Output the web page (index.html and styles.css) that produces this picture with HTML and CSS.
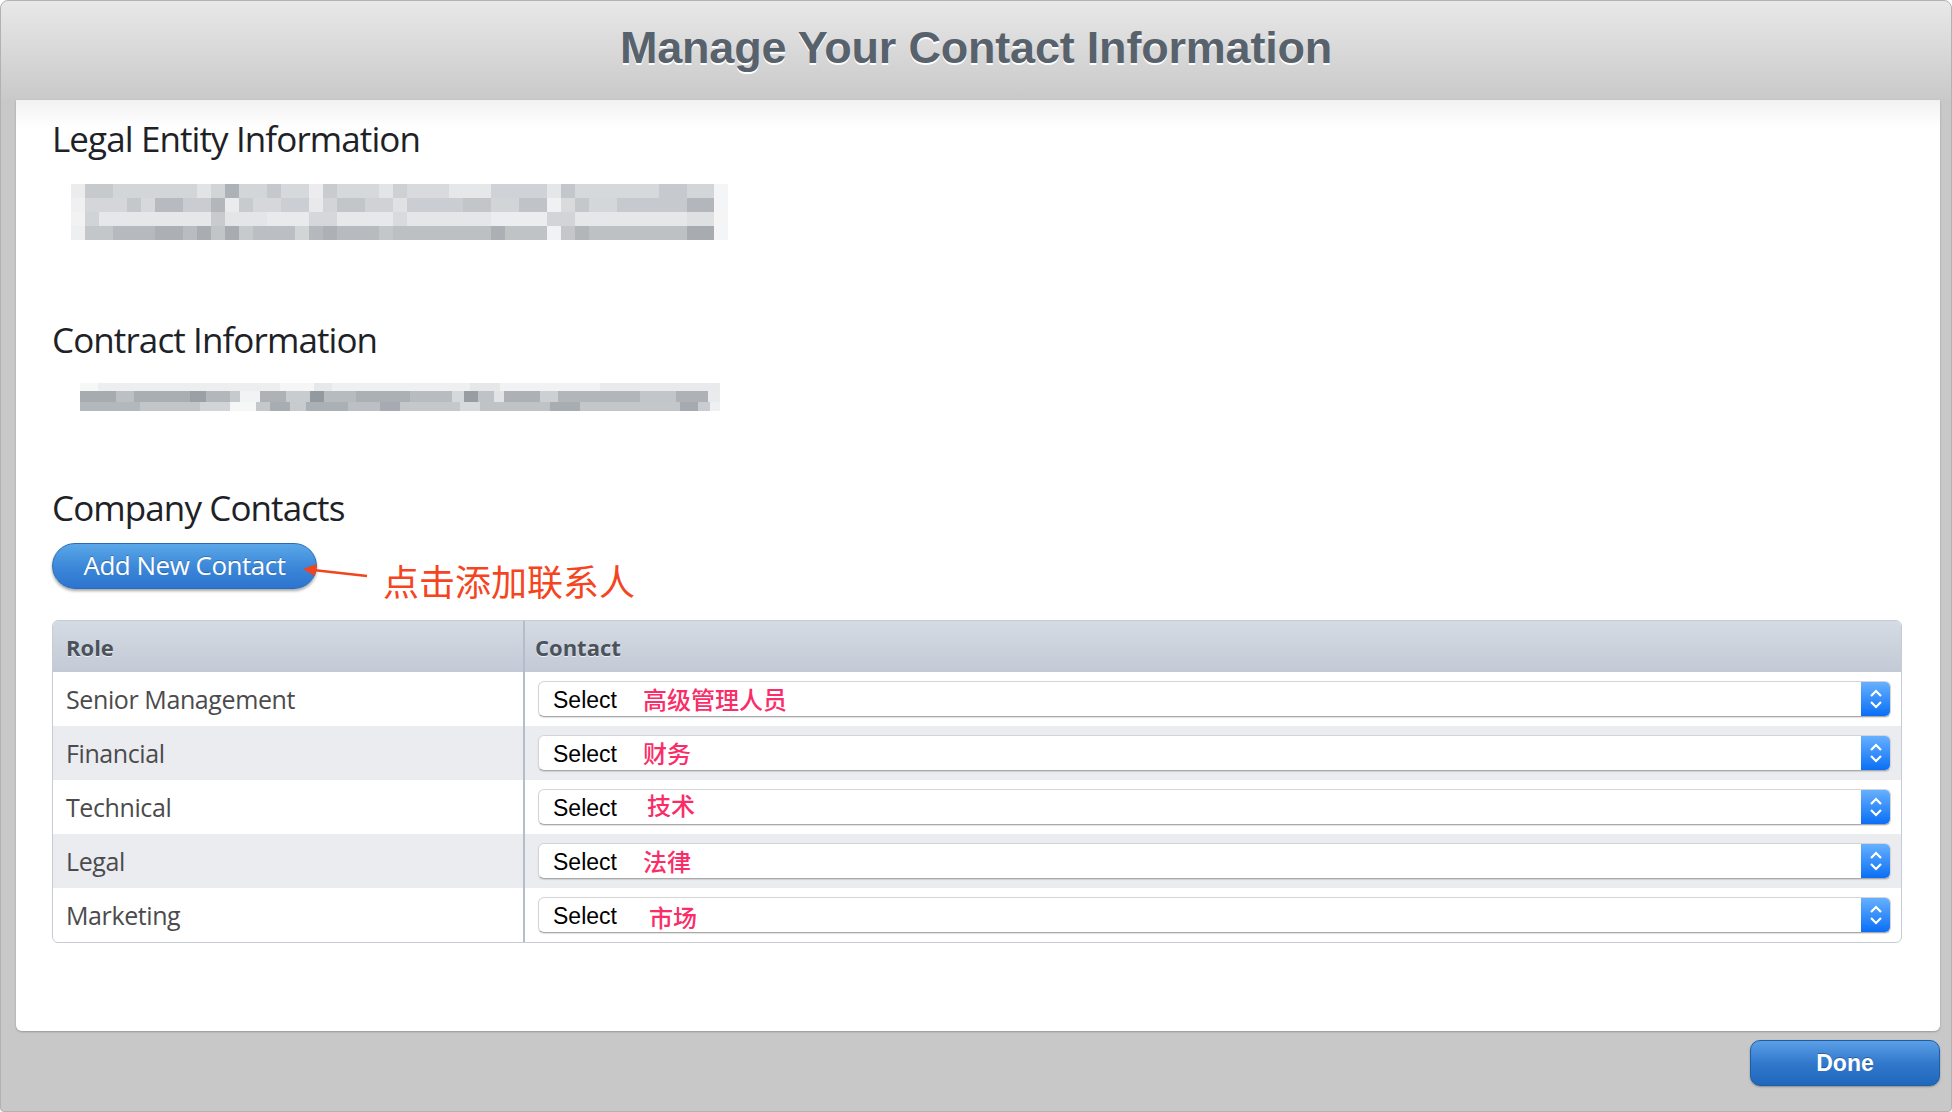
FILE: index.html
```html
<!DOCTYPE html>
<html lang="en">
<head>
  <meta charset="UTF-8">
  <meta name="viewport" content="width=device-width, initial-scale=1.0">
  <title>Manage Your Contact Information</title>
  <link rel="stylesheet" href="styles.css">
</head>
<body>
  <div class="window">
    <header class="titlebar">
      <h1>Manage Your Contact Information</h1>
    </header>

    <main class="panel">
      <h2 class="section-title">Legal Entity Information</h2>
      <div class="redacted entity">
        <div class="px e1"></div>
        <div class="px e2"></div>
        <div class="px e3"></div>
        <div class="px e4"></div>
      </div>

      <h2 class="section-title contract-title">Contract Information</h2>
      <div class="redacted contract">
        <div class="px c1"></div>
        <div class="px c2"></div>
        <div class="px c3"></div>
      </div>

      <h2 class="section-title contacts-title">Company Contacts</h2>
      <div class="add-row">
        <button class="btn-add">Add New Contact</button>
        <svg class="arrow" width="70" height="20" viewBox="0 0 70 20">
          <line x1="10" y1="6" x2="64" y2="12" stroke="#f2441d" stroke-width="2.5"/>
          <polygon points="0,5 14,0 12,12" fill="#f2441d"/>
        </svg>
        <span class="note">点击添加联系人</span>
      </div>

      <div class="table-wrap">
        <table class="roles">
          <thead>
            <tr>
              <th class="col-role">Role</th>
              <th>Contact</th>
            </tr>
          </thead>
          <tbody>
            <tr>
              <td class="role">Senior Management</td>
              <td><div class="picker"><span class="picker-label">Select</span><span class="hint">高级管理人员</span><span class="stepper"><svg width="14" height="20" viewBox="0 0 14 20"><polyline points="2,7 7,2 12,7" /><polyline points="2,13 7,18 12,13" /></svg></span></div></td>
            </tr>
            <tr class="alt">
              <td class="role">Financial</td>
              <td><div class="picker"><span class="picker-label">Select</span><span class="hint">财务</span><span class="stepper"><svg width="14" height="20" viewBox="0 0 14 20"><polyline points="2,7 7,2 12,7" /><polyline points="2,13 7,18 12,13" /></svg></span></div></td>
            </tr>
            <tr>
              <td class="role">Technical</td>
              <td><div class="picker"><span class="picker-label">Select</span><span class="hint up">技术</span><span class="stepper"><svg width="14" height="20" viewBox="0 0 14 20"><polyline points="2,7 7,2 12,7" /><polyline points="2,13 7,18 12,13" /></svg></span></div></td>
            </tr>
            <tr class="alt">
              <td class="role">Legal</td>
              <td><div class="picker"><span class="picker-label">Select</span><span class="hint">法律</span><span class="stepper"><svg width="14" height="20" viewBox="0 0 14 20"><polyline points="2,7 7,2 12,7" /><polyline points="2,13 7,18 12,13" /></svg></span></div></td>
            </tr>
            <tr>
              <td class="role">Marketing</td>
              <td><div class="picker"><span class="picker-label">Select</span><span class="hint down">市场</span><span class="stepper"><svg width="14" height="20" viewBox="0 0 14 20"><polyline points="2,7 7,2 12,7" /><polyline points="2,13 7,18 12,13" /></svg></span></div></td>
            </tr>
          </tbody>
        </table>
      </div>
    </main>

    <footer class="bottombar">
      <button class="btn-done">Done</button>
    </footer>
  </div>
</body>
</html>
```

FILE: styles.css
```css
html, body {
    margin: 0;
    padding: 0;
    background-color: #fff;
}

body {
    font-family: "Open Sans", "Noto Sans", sans-serif;
}

.window {
    box-sizing: border-box;
    height: 100vh;
    display: flex;
    flex-direction: column;
    background-color: #c8c8c8;
    border: 1px solid #b2b2b2;
    border-radius: 8px 8px 4px 4px;
    overflow: hidden;
}

/* barra do título */
.titlebar {
    height: 99px;
    flex: none;
    display: flex;
    align-items: center;
    justify-content: center;
    box-sizing: border-box;
    padding-bottom: 6px;
    background: linear-gradient(#e8e8e8, #c9c9c9);
}

.titlebar h1 {
    margin: 0;
    font-family: "Liberation Sans", Arial, sans-serif;
    font-weight: bold;
    font-size: 45px;
    color: #58626c;
    text-shadow: 0 2px 0 #fff;
    letter-spacing: -0.2px;
}

/* painel branco */
.panel {
    flex: 1;
    margin: 0 11px 0 15px;
    padding: 21px 38px 0 36px;
    background: linear-gradient(#f1f1f1, #fff 28px);
    border-radius: 0 0 6px 6px;
    box-shadow: 0 1px 2px rgba(0,0,0,0.25);
}

.section-title {
    margin: 0;
    font-weight: normal;
    font-size: 35px;
    line-height: 36px;
    letter-spacing: -0.9px;
    color: #1e2227;
}

.contract-title {
    margin-top: 82px;
}

.contacts-title {
    margin-top: 79px;
}

.redacted .px {
    height: 14px;
}

.entity {
    width: 657px;
    margin: 27px 0 0 19px;
}

.e1 {
    background: linear-gradient(90deg, #ececed 0 14px, #c6cacd 14px 42px, #d3d6d9 42px 126px, #e2e3e5 126px 140px, #d2d5d8 140px 154px, #adb1b8 154px 168px, #d3d6d9 168px 196px, #c5c9cd 196px 210px, #d6d9dc 210px 238px, #ececee 238px 252px, #c9cccf 252px 266px, #d6d9dc 266px 308px, #e3e4e6 308px 322px, #cdd1d4 322px 336px, #d8dadd 336px 378px, #e6e7e9 378px 420px, #cfd2d6 420px 476px, #e5e6e7 476px 490px, #c3c6ca 490px 504px, #d6d9dc 504px 588px, #c6c9cd 588px 616px, #d3d6d9 616px 643px, #f4f5f6 643px 657px);
}

.e2 {
    background: linear-gradient(90deg, #eff0f1 0 14px, #d4d6d9 14px 56px, #c4c7cb 56px 70px, #d6d8db 70px 84px, #b7bbbf 84px 112px, #c9ccd0 112px 140px, #b3b7bb 140px 154px, #eaebec 154px 168px, #c8cbce 168px 182px, #d5d7da 182px 210px, #cbced2 210px 238px, #e8e9ea 238px 252px, #d2d4d7 252px 266px, #c2c5c9 266px 294px, #d0d3d6 294px 322px, #e0e1e3 322px 336px, #cacdd1 336px 392px, #c2c6c9 392px 420px, #d2d5d8 420px 448px, #c0c3c7 448px 476px, #f0f1f2 476px 490px, #d9dadc 490px 504px, #c4c7cb 504px 518px, #d4d7da 518px 546px, #c6c9cd 546px 616px, #b3b6ba 616px 643px, #f4f5f6 643px 657px);
}

.e3 {
    background: linear-gradient(90deg, #f2f2f3 0 14px, #d1d4d7 14px 28px, #e6e7e8 28px 140px, #c8cbce 140px 154px, #e4e5e7 154px 196px, #e9eaeb 196px 238px, #d5d7da 238px 266px, #e7e8e9 266px 322px, #d9dadc 322px 336px, #e5e6e8 336px 420px, #ecedee 420px 476px, #d2d4d7 476px 504px, #e6e7e8 504px 616px, #dfe0e2 616px 643px, #f5f5f6 643px 657px);
}

.e4 {
    background: linear-gradient(90deg, #eeeff0 0 14px, #c3c7ca 14px 42px, #b6babe 42px 84px, #acb0b4 84px 112px, #b9bcc0 112px 126px, #a9adb2 126px 140px, #c2c5c8 140px 154px, #a8acb1 154px 168px, #c7cacd 168px 182px, #bbbfc3 182px 224px, #d2d5d8 224px 238px, #b5b9bd 238px 252px, #adb1b5 252px 266px, #b7bbbf 266px 308px, #c4c7ca 308px 322px, #bcc0c3 322px 420px, #acb0b4 420px 434px, #c0c3c6 434px 476px, #f1f2f3 476px 490px, #c4c6ca 490px 504px, #b2b6ba 504px 518px, #bdc1c4 518px 616px, #a8acb1 616px 643px, #f4f5f6 643px 657px);
}

.contract {
    width: 640px;
    margin: 25px 0 0 28px;
}

.contract .c1 { height: 8px; }
.contract .c2 { height: 11px; }
.contract .c3 { height: 9px; }

.c1 {
    background: linear-gradient(90deg, #f6f7f7 0 18px, #eceeef 18px 200px, #f6f6f7 200px 234px, #e6e8ea 234px 252px, #eff0f1 252px 390px, #e5e7e9 390px 420px, #f1f2f3 420px 520px, #e8eaeb 520px 640px);
}

.c2 {
    background: linear-gradient(90deg, #a6abb0 0 36px, #bcc0c4 36px 54px, #a9aeb3 54px 110px, #9aa0a5 110px 126px, #b3b7bb 126px 150px, #c6cacd 150px 160px, #f2f3f4 160px 180px, #aeb2b7 180px 206px, #c9cccf 206px 230px, #939a9f 230px 244px, #b6bbbf 244px 276px, #aab0b4 276px 330px, #b8bcc0 330px 372px, #d6d9db 372px 384px, #979da2 384px 398px, #bfc3c7 398px 414px, #e1e3e5 414px 424px, #adb1b6 424px 460px, #cdd0d3 460px 478px, #b2b6ba 478px 560px, #c2c5c9 560px 596px, #aeb2b6 596px 628px, #e9ebec 628px 640px);
}

.c3 {
    background: linear-gradient(90deg, #b3b8bc 0 60px, #c2c6c9 60px 120px, #d2d5d8 120px 150px, #f5f6f6 150px 176px, #c4c8cb 176px 190px, #a7adb2 190px 210px, #c7cbce 210px 226px, #aab0b4 226px 268px, #bcc0c4 268px 300px, #a7abb1 300px 320px, #c4c8cb 320px 380px, #d7dadc 380px 400px, #bfc3c6 400px 470px, #a8adb2 470px 500px, #c3c7ca 500px 600px, #a5aab0 600px 618px, #c9ccd0 618px 630px, #eef0f1 630px 640px);
}

/* botão de adicionar e anotação */
.add-row {
    display: flex;
    align-items: center;
    margin-top: 17px;
    height: 46px;
}

.btn-add {
    box-sizing: border-box;
    height: 46px;
    width: 265px;
    padding: 0 0 2px 0;
    border: 1px solid #2b6bb4;
    border-radius: 23px;
    background: linear-gradient(#5aa7e8, #3a86d8 55%, #2d74cf);
    box-shadow: 0 2px 3px rgba(0,0,0,0.35);
    color: #fff;
    font-family: "Open Sans", "Noto Sans", sans-serif;
    font-size: 26px;
    letter-spacing: -0.5px;
    text-shadow: 0 -1px 0 rgba(0,0,0,0.25);
}

.arrow {
    margin: 16px 0 0 -14px;
    flex: none;
}

.note {
    margin: 28px 0 0 10px;
    font-family: "Noto Sans CJK SC", sans-serif;
    font-size: 36px;
    color: #f5451f;
}

/* tabela de funções */
.table-wrap {
    margin-top: 31px;
    border: 1px solid #c6ccd6;
    border-radius: 6px;
    overflow: hidden;
}

.roles {
    width: 100%;
    border-collapse: collapse;
}

.roles th {
    height: 51px;
    padding: 0 10px;
    text-align: left;
    font-size: 22px;
    font-weight: bold;
    color: #4a525c;
    text-shadow: 0 1px 0 rgba(255,255,255,0.7);
    background: linear-gradient(#d5dbe3, #c3cad6);
}

.roles th.col-role {
    width: 447px;
    padding-left: 13px;
    border-right: 2px solid #b5bdca;
}

.roles td {
    height: 54px;
    padding: 0 10px 0 13px;
    vertical-align: middle;
}

.roles td.role {
    border-right: 2px solid #b5bdca;
    font-size: 25px;
    letter-spacing: -0.4px;
    color: #4b4b4d;
}

.roles tr.alt td {
    background-color: #ebecf0;
}

.picker {
    box-sizing: border-box;
    height: 36px;
    display: flex;
    align-items: center;
    background-color: #fff;
    border: 1px solid #d4d4d4;
    border-bottom-color: #a9a9a9;
    border-radius: 6px;
    box-shadow: 0 1px 1px rgba(0,0,0,0.12);
}

.picker-label {
    padding: 3px 0 0 14px;
    width: 90px;
    font-family: "Liberation Sans", Arial, sans-serif;
    font-size: 23px;
    color: #000;
}

.hint {
    flex: 1;
    font-family: "Noto Sans CJK SC", sans-serif;
    font-weight: 500;
    font-size: 24px;
    line-height: 30px;
    color: #fa2d69;
}

.hint.up {
    padding-left: 4px;
    margin-top: -5px;
}

.hint.down {
    padding-left: 6px;
    margin-top: 3px;
}

.stepper {
    align-self: stretch;
    width: 29px;
    display: flex;
    align-items: center;
    justify-content: center;
    border-radius: 0 5px 5px 0;
    background: linear-gradient(#66b0ff, #0a6ff5);
}

.stepper svg polyline {
    fill: none;
    stroke: #fff;
    stroke-width: 2.2;
}

/* rodapé */
.bottombar {
    height: 80px;
    flex: none;
    display: flex;
    justify-content: flex-end;
    align-items: flex-start;
    padding: 9px 11px 0 0;
    box-sizing: border-box;
}

.btn-done {
    width: 190px;
    height: 46px;
    border: 1px solid #1e5ea8;
    border-radius: 10px;
    background: linear-gradient(#5b9fe6, #3279cd 50%, #1f67bb);
    box-shadow: 0 1px 2px rgba(0,0,0,0.3);
    color: #fff;
    font-family: "Liberation Sans", Arial, sans-serif;
    font-weight: bold;
    font-size: 23px;
    text-shadow: 0 -1px 0 rgba(0,0,0,0.3);
}
```
